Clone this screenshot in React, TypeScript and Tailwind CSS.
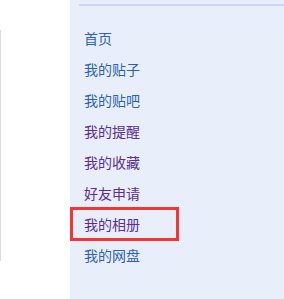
import React from "react";

const items: { label: string; visited: boolean }[] = [
  { label: "首页", visited: false },
  { label: "我的贴子", visited: false },
  { label: "我的贴吧", visited: false },
  { label: "我的提醒", visited: true },
  { label: "我的收藏", visited: true },
  { label: "好友申请", visited: true },
  { label: "我的相册", visited: true },
  { label: "我的网盘", visited: false },
];

export default function App() {
  return (
    <div
      className="relative flex w-[284px] h-[299px] bg-white overflow-hidden"
      style={{ fontFamily: '"Noto Sans CJK SC", "Noto Sans", sans-serif' }}
    >
      <div className="w-[70px] shrink-0">
        <div className="mt-[30px] h-[231px] border-l border-[#dcdcdc]" />
      </div>
      <div className="flex-1 bg-[#e8effb] pt-[4px]">
        <div className="ml-[9px] h-[2px] bg-[#c9d8f0]" />
        <ul className="mt-[17px] pl-[14px]">
          {items.map((it) => (
            <li
              key={it.label}
              className={`h-[31px] leading-[31px] text-[14px] ${
                it.visited ? "text-[#5b2d98]" : "text-[#2c5fba]"
              }`}
            >
              {it.label}
            </li>
          ))}
        </ul>
      </div>
      <div className="absolute left-[70px] top-[207px] w-[109px] h-[34px] border-[3px] border-[#f43535]" />
    </div>
  );
}
